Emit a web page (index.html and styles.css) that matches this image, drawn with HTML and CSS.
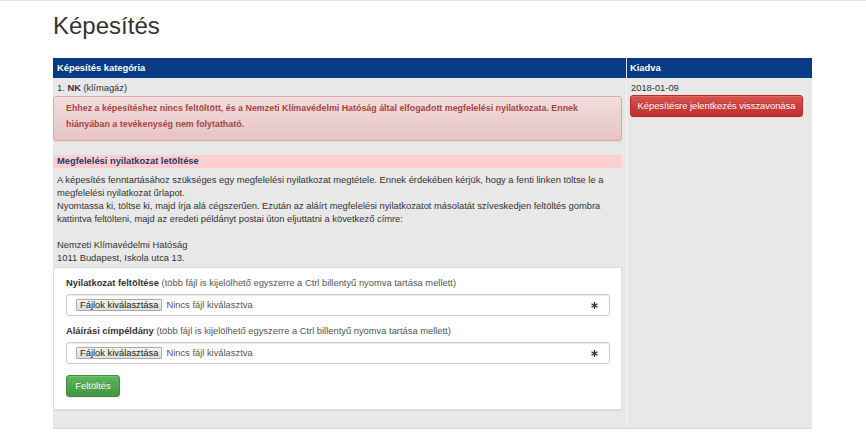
FILE: index.html
```html
<!DOCTYPE html>
<html lang="hu">
<head>
<meta charset="utf-8">
<title>Képesítés</title>
<link rel="stylesheet" href="styles.css">
</head>
<body>
<div class="topline"></div>
<div class="container">
  <h1 class="title">Képesítés</h1>
  <div class="qual">
    <div class="qual-head">
      <div class="col-cat">Képesítés kategória</div>
      <div class="col-date">Kiadva</div>
    </div>
    <div class="qual-row">
      <div class="col-cat">
        <div class="cat-name">1. <b>NK</b> (klímagáz)</div>
        <div class="alert">Ehhez a képesítéshez nincs feltöltött, és a Nemzeti Klímavédelmi Hatóság által elfogadott megfelelési nyilatkozata. Ennek hiányában a tevékenység nem folytatható.</div>
        <div class="sub-head">Megfelelési nyilatkozat letöltése</div>
        <div class="info">
          A képesítés fenntartásához szükséges egy megfelelési nyilatkozat megtétele. Ennek érdekében kérjük, hogy a fenti linken töltse le a megfelelési nyilatkozat űrlapot.<br>
          Nyomtassa ki, töltse ki, majd írja alá cégszerűen. Ezután az aláírt megfelelési nyilatkozatot másolatát szíveskedjen feltöltés gombra kattintva feltölteni, majd az eredeti példányt postai úton eljuttatni a következő címre:<br>
          <br>
          Nemzeti Klímavédelmi Hatóság<br>
          1011 Budapest, Iskola utca 13.
        </div>
        <div class="panel">
          <div class="form-group">
            <div class="label"><b>Nyilatkozat feltöltése</b> (több fájl is kijelölhető egyszerre a Ctrl billentyű nyomva tartása mellett)</div>
            <div class="file-input">
              <span class="file-btn">Fájlok kiválasztása</span>
              <span class="file-none">Nincs fájl kiválasztva</span>
              <svg class="req" width="7" height="7" viewBox="0 0 10 10"><g stroke="#333" stroke-width="2" stroke-linecap="butt"><line x1="5" y1="0" x2="5" y2="10"/><line x1="0.7" y1="2.5" x2="9.3" y2="7.5"/><line x1="0.7" y1="7.5" x2="9.3" y2="2.5"/></g></svg>
            </div>
          </div>
          <div class="form-group">
            <div class="label"><b>Aláírási címpéldány</b> (több fájl is kijelölhető egyszerre a Ctrl billentyű nyomva tartása mellett)</div>
            <div class="file-input">
              <span class="file-btn">Fájlok kiválasztása</span>
              <span class="file-none">Nincs fájl kiválasztva</span>
              <svg class="req" width="7" height="7" viewBox="0 0 10 10"><g stroke="#333" stroke-width="2" stroke-linecap="butt"><line x1="5" y1="0" x2="5" y2="10"/><line x1="0.7" y1="2.5" x2="9.3" y2="7.5"/><line x1="0.7" y1="7.5" x2="9.3" y2="2.5"/></g></svg>
            </div>
          </div>
          <button class="btn btn-success" type="button">Feltöltés</button>
        </div>
      </div>
      <div class="col-date">
        <div class="date">2018-01-09</div>
        <button class="btn btn-danger" type="button">Képesítésre jelentkezés visszavonása</button>
      </div>
    </div>
  </div>
</div>
</body>
</html>
```

FILE: styles.css
```css
html, body {
  margin: 0;
  padding: 0;
  background: #fff;
}
body {
  font-family: "Liberation Sans", Arial, sans-serif;
  font-size: 9.35px;
  line-height: 13px;
  color: #333;
}
.topline {
  height: 1px;
  background: #e9e9e9;
}
.container {
  margin-left: 53px;
  width: 759px;
}
.title {
  margin: 12px 0 19px;
  font-size: 24px;
  line-height: 26px;
  font-weight: normal;
  color: #333;
}
.qual-head {
  display: flex;
  height: 20px;
  background: #073c85;
  color: #fff;
  font-weight: bold;
  line-height: 20px;
}
.qual-head .col-cat {
  width: 569px;
  padding-left: 4px;
}
.qual-head .col-date {
  flex: 1;
  border-left: 1px solid #d6deea;
  padding-left: 3px;
}
.qual-row {
  display: flex;
  background: #e8e8e8;
  border-bottom: 1px solid #dadada;
}
.qual-row .col-cat {
  width: 569px;
  padding: 4px 4px 18px 0;
}
.qual-row .col-date {
  flex: 1;
  border-left: 1px solid #f3f3f3;
  padding: 3px 0 0 3px;
}
.cat-name {
  padding-left: 4px;
}
.alert {
  margin-top: 1px;
  padding: 3px 12px 8px;
  border: 1px solid #dca7a7;
  border-radius: 3px;
  background: linear-gradient(to bottom, #f2dede 0, #e7c3c3 100%);
  box-shadow: inset 0 1px 0 rgba(255,255,255,.25), 0 1px 2px rgba(0,0,0,.05);
  color: #a94442;
  font-size: 8.9px;
  font-weight: bold;
  line-height: 16px;
}
.sub-head {
  margin-top: 14px;
  padding-left: 4px;
  background: #ffcfcf;
  color: #2b3766;
  font-weight: bold;
  line-height: 13px;
}
.info {
  margin-top: 6px;
  padding-left: 4px;
}
.panel {
  margin-top: 2px;
  padding: 9px 12px 12px;
  background: #fff;
  border: 1px solid #dcdcdc;
  border-radius: 2px;
  box-shadow: 0 1px 1px rgba(0,0,0,.06);
}
.form-group {
  margin-bottom: 9px;
}
.label {
  margin-bottom: 4px;
  color: #555;
}
.label b {
  color: #333;
}
.file-input {
  display: flex;
  align-items: center;
  height: 20px;
  margin-right: -1px;
  padding: 0 9px;
  border: 1px solid #ccc;
  border-radius: 3px;
  background: #fff;
  box-shadow: inset 0 1px 1px rgba(0,0,0,.075);
}
.file-btn {
  display: inline-block;
  height: 10px;
  line-height: 10px;
  padding: 0 3px;
  border: 1px solid #a9a9a9;
  border-radius: 1px;
  background: linear-gradient(to bottom, #f4f4f4, #dedede);
  color: #222;
}
.file-none {
  margin-left: 4px;
  color: #555;
}
.req {
  margin-left: auto;
  margin-right: 2px;
}
.btn {
  display: inline-block;
  height: 22px;
  padding: 0 8px;
  font-family: inherit;
  font-size: 9.35px;
  line-height: 20px;
  color: #fff;
  border-radius: 3px;
  cursor: pointer;
  text-shadow: 0 -1px 0 rgba(0,0,0,.2);
  box-shadow: inset 0 1px 0 rgba(255,255,255,.15), 0 1px 1px rgba(0,0,0,.075);
}
.btn-success {
  margin-top: 2px;
  width: 54px;
  padding: 0;
  border: 1px solid #3e8f3e;
  background: linear-gradient(to bottom, #5cb85c 0, #419641 100%);
}
.btn-danger {
  display: block;
  width: 173px;
  padding: 0;
  border: 1px solid #b92c28;
  background: linear-gradient(to bottom, #d9534f 0, #c12e2a 100%);
}
.date {
  line-height: 13px;
  padding-left: 1px;
  padding-top: 1px;
}
```
